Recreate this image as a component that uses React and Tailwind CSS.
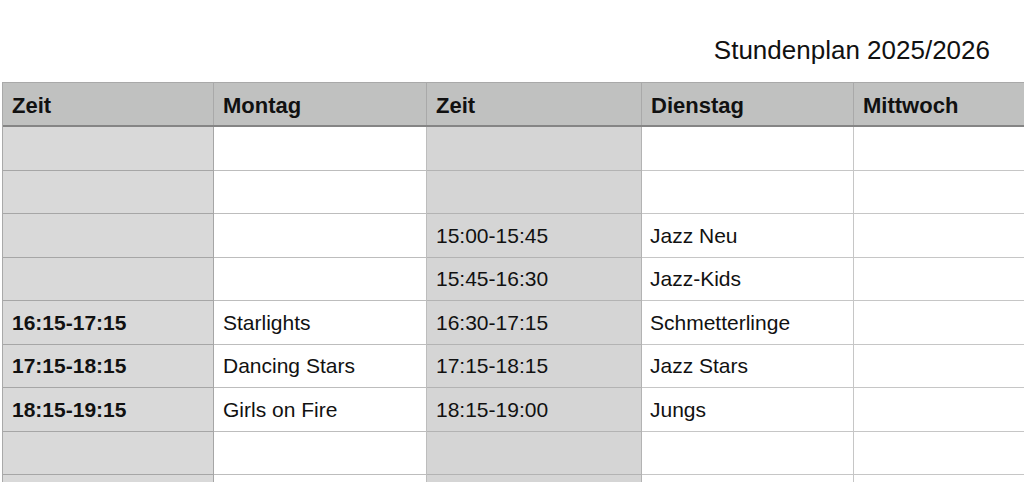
import React from 'react';

const rows = [
  ['', '', '', ''],
  ['', '', '', ''],
  ['', '', '15:00-15:45', 'Jazz Neu'],
  ['', '', '15:45-16:30', 'Jazz-Kids'],
  ['16:15-17:15', 'Starlights', '16:30-17:15', 'Schmetterlinge'],
  ['17:15-18:15', 'Dancing Stars', '17:15-18:15', 'Jazz Stars'],
  ['18:15-19:15', 'Girls on Fire', '18:15-19:00', 'Jungs'],
  ['', '', '', ''],
  ['', '', '', ''],
];

const cols = 'grid grid-cols-[211px_213px_215px_212px_1fr]';

const App = () => {
  return (
    <div className="w-[1024px] h-[482px] overflow-hidden bg-white font-['Liberation_Sans',Arial,sans-serif] text-[#111]">
      <div className="h-[82px] flex items-start justify-end pr-[34px] pt-[35px]">
        <h1 className="text-[26px] leading-[30px]">Stundenplan 2025/2026</h1>
      </div>
      <div className="ml-[2px] w-[1040px] border-l border-t border-[#a9a9a9]">
        <div className={`${cols} h-[44px] bg-[#c0c1c0] border-b-2 border-[#858585] font-bold text-[22px]`}>
          {['Zeit', 'Montag', 'Zeit', 'Dienstag', 'Mittwoch'].map((h, i) => (
            <div key={i} className="flex items-center pl-[9px] pt-[2px] border-r border-[#a9a9a9]">
              {h}
            </div>
          ))}
        </div>
        {rows.map((r, i) => (
          <div key={i} className={`${cols} h-[43.5px] text-[21px]`}>
            <div className="flex items-center pl-[9px] bg-[#d9d9d9] border-b border-r border-[#a6a6a6] font-bold">{r[0]}</div>
            <div className="flex items-center pl-[9px] border-b border-r border-[#bdbdbd]">{r[1]}</div>
            <div className="flex items-center pl-[9px] bg-[#d5d5d5] border-b border-r border-[#b3b3b3]">{r[2]}</div>
            <div className="flex items-center pl-[8px] border-b border-r border-[#c6c6c6]">{r[3]}</div>
            <div className="border-b border-[#c6c6c6]"></div>
          </div>
        ))}
      </div>
    </div>
  );
};

export default App;
